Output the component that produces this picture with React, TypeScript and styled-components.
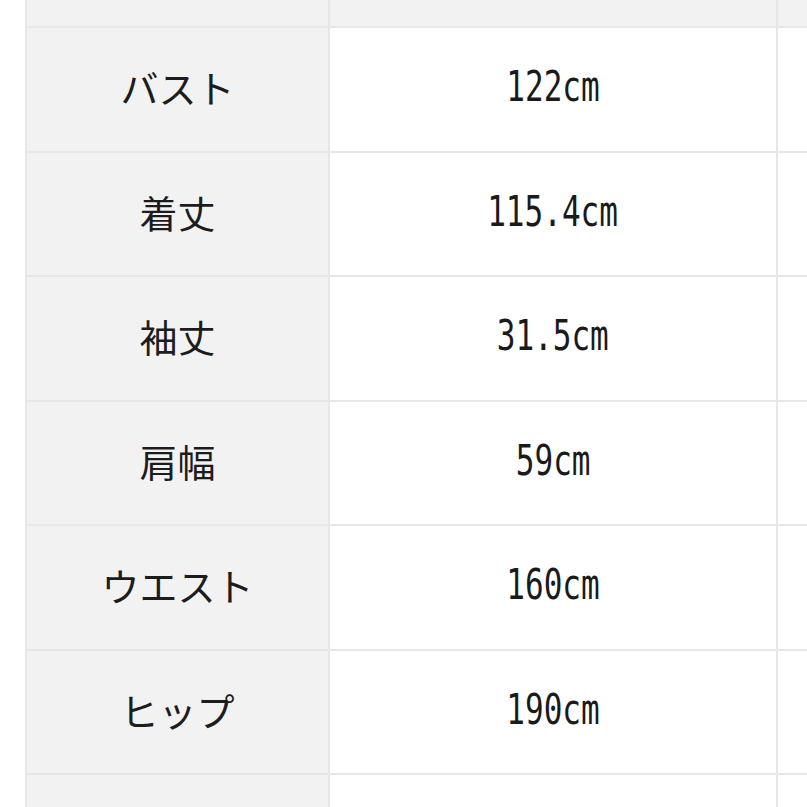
import React from "react";
import styled, { createGlobalStyle } from "styled-components";

const Global = createGlobalStyle`
  html, body {
    margin: 0;
    padding: 0;
    background: #ffffff;
    overflow: hidden;
  }
  body {
    width: 807px;
    height: 807px;
  }
`;

const Page = styled.div`
  width: 807px;
  height: 807px;
  overflow: hidden;
  padding-left: 25px;
  box-sizing: border-box;
`;

const Table = styled.div`
  display: grid;
  width: 980px;
  grid-template-columns: 301px 446px 200px;
  grid-template-rows: 26px repeat(6, 122.5px) 60px;
  gap: 2px;
  padding-left: 2px;
  background: #e7e7e7;
`;

const Cell = styled.div<{ $label?: boolean; $head?: boolean }>`
  display: flex;
  align-items: center;
  justify-content: center;
  background: ${(p) => (p.$label || p.$head ? "#f2f2f2" : "#ffffff")};
  color: #1c1c1c;
  overflow: hidden;
`;

const Label = styled.span`
  font-family: "Noto Sans CJK JP", "Noto Sans", sans-serif;
  font-size: 38px;
  font-weight: 400;
  line-height: 1;
  margin-top: -4px;
`;

const Value = styled.span`
  display: inline-block;
  font-family: "DejaVu Sans Mono", "Liberation Mono", monospace;
  font-size: 42.5px;
  line-height: 1;
  color: #1a1a1a;
  transform: scaleX(0.73);
  margin-top: -4px;
  white-space: pre;
`;

const rows = [
  { label: "バスト", value: "122cm" },
  { label: "着丈", value: "115.4cm" },
  { label: "袖丈", value: "31.5cm" },
  { label: "肩幅", value: "59cm" },
  { label: "ウエスト", value: "160cm" },
  { label: "ヒップ", value: "190cm" },
];

export default function App() {
  return (
    <Page>
      <Global />
      <Table>
        <Cell $head />
        <Cell $head />
        <Cell $head />
        {rows.map((r) => (
          <React.Fragment key={r.label}>
            <Cell $label>
              <Label>{r.label}</Label>
            </Cell>
            <Cell>
              <Value>{r.value}</Value>
            </Cell>
            <Cell />
          </React.Fragment>
        ))}
        <Cell $label />
        <Cell />
        <Cell />
      </Table>
    </Page>
  );
}
